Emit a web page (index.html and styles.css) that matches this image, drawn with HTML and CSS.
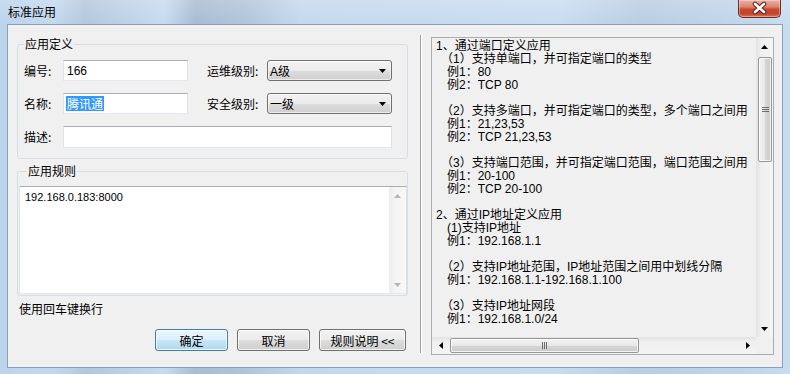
FILE: index.html
```html
<html>
<head>
<link rel="stylesheet" href="styles.css">
</head>
<body>
<div class="window">
    <div class="titlebar">
        <span class="title">标准应用</span>
        <div class="close">
            <svg width="41" height="17" viewBox="0 0 41 17">
                <path d="M16 4 L25 12 M25 4 L16 12" stroke="#5a1e16" stroke-width="4.6" stroke-linecap="round"/>
                <path d="M16 4 L25 12 M25 4 L16 12" stroke="#fff" stroke-width="2.6" stroke-linecap="round"/>
            </svg>
        </div>
    </div>

    <div class="client">
        <div class="left">
            <fieldset class="group group-def">
                <legend>应用定义</legend>
                <div class="form">
                    <span class="lbl">编号:</span>
                    <div class="edit">166</div>
                    <span class="lbl col4">运维级别:</span>
                    <div class="combo"><span>A级</span><svg width="7" height="4" viewBox="0 0 7 4"><path d="M0 0 H7 L3.5 4 Z" fill="#000"/></svg></div>

                    <span class="lbl">名称:</span>
                    <div class="edit"><span class="sel">腾讯通</span></div>
                    <span class="lbl col4">安全级别:</span>
                    <div class="combo"><span>一级</span><svg width="7" height="4" viewBox="0 0 7 4"><path d="M0 0 H7 L3.5 4 Z" fill="#000"/></svg></div>

                    <span class="lbl">描述:</span>
                    <div class="edit wide"></div>
                </div>
            </fieldset>

            <fieldset class="group group-rules">
                <legend>应用规则</legend>
                <div class="memo">
                    <div class="memo-text">192.168.0.183:8000</div>
                    <div class="vbar vbar-off">
                        <div class="arrow"><svg width="7" height="4" viewBox="0 0 7 4"><path d="M0 4 H7 L3.5 0 Z" fill="#b4b4b4"/></svg></div>
                        <div class="fill"></div>
                        <div class="arrow"><svg width="7" height="4" viewBox="0 0 7 4"><path d="M0 0 H7 L3.5 4 Z" fill="#b4b4b4"/></svg></div>
                    </div>
                </div>
            </fieldset>

            <div class="hint">使用回车键换行</div>

            <div class="buttons">
                <div class="btn btn-default">确定</div>
                <div class="btn">取消</div>
                <div class="btn btn-wide">规则说明 &lt;&lt;</div>
            </div>
        </div>

        <div class="sep"></div>

        <div class="help">
            <div class="help-text">
                <div>1、通过端口定义应用</div>
                <div class="p">（1）支持单端口，并可指定端口的类型</div>
                <div class="e">例1：80</div>
                <div class="e">例2：TCP 80</div>
                <div class="gap"></div>
                <div class="p">（2）支持多端口，并可指定端口的类型，多个端口之间用</div>
                <div class="e">例1：21,23,53</div>
                <div class="e">例2：TCP 21,23,53</div>
                <div class="gap"></div>
                <div class="p">（3）支持端口范围，并可指定端口范围，端口范围之间用</div>
                <div class="e">例1：20-100</div>
                <div class="e">例2：TCP 20-100</div>
                <div class="gap"></div>
                <div>2、通过IP地址定义应用</div>
                <div class="e">(1)支持IP地址</div>
                <div class="e">例1：192.168.1.1</div>
                <div class="gap"></div>
                <div class="p">（2）支持IP地址范围，IP地址范围之间用中划线分隔</div>
                <div class="e">例1：192.168.1.1-192.168.1.100</div>
                <div class="gap"></div>
                <div class="p">（3）支持IP地址网段</div>
                <div class="e">例1：192.168.1.0/24</div>
            </div>

            <div class="vbar">
                <div class="arrow"><svg width="7" height="4" viewBox="0 0 7 4"><path d="M0 4 H7 L3.5 0 Z" fill="#000"/></svg></div>
                <div class="thumb thumb-v">
                    <svg width="7" height="5" viewBox="0 0 7 5"><path d="M0 0.5 H7 M0 2.5 H7 M0 4.5 H7" stroke="#6b6b6b" stroke-width="1"/></svg>
                </div>
                <div class="fill"></div>
                <div class="arrow"><svg width="7" height="4" viewBox="0 0 7 4"><path d="M0 0 H7 L3.5 4 Z" fill="#000"/></svg></div>
            </div>

            <div class="hbar">
                <div class="arrow"><svg width="4" height="7" viewBox="0 0 4 7"><path d="M4 0 V7 L0 3.5 Z" fill="#000"/></svg></div>
                <div class="thumb thumb-h">
                    <svg width="5" height="7" viewBox="0 0 5 7"><path d="M0.5 0 V7 M2.5 0 V7 M4.5 0 V7" stroke="#6b6b6b" stroke-width="1"/></svg>
                </div>
                <div class="fill"></div>
                <div class="arrow"><svg width="4" height="7" viewBox="0 0 4 7"><path d="M0 0 V7 L4 3.5 Z" fill="#000"/></svg></div>
            </div>

            <div class="corner"></div>
        </div>
    </div>
</div>
</body>
</html>
```

FILE: styles.css
```css
html, body {
    margin: 0;
    width: 790px;
    height: 374px;
    overflow: hidden;
}

body {
    font-family: "Liberation Sans", "Noto Sans CJK SC", sans-serif;
    font-size: 12px;
    color: #000;
}

.window {
    width: 790px;
    height: 374px;
    box-sizing: border-box;
    padding: 0 7px 6px 7px;
    display: flex;
    flex-direction: column;
    background:
        linear-gradient(180deg, rgba(255,255,255,.18) 0, rgba(255,255,255,0) 24px),
        linear-gradient(90deg, #bcd4ec 0, #c3d8ee 55px, #b3c7dc 85px, #bdd1e6 125px, #c6dbf0 165px, #a8bcd2 195px, #b0c4d9 245px, #c4d8ed 300px, #c8dcf0 560px, #b9cde2 640px, #c3d7ec 760px, #c9ddf1 790px);
}

.titlebar {
    height: 24px;
    display: flex;
    align-items: flex-start;
    margin: 0 -7px;
    padding: 0 9px 0 8px;
}

.title {
    line-height: 24px;
    font-family: "Noto Sans CJK SC", sans-serif;
    font-size: 12px;
}

.close {
    margin-left: auto;
    width: 41px;
    height: 17px;
    border: 1px solid #6d2b22;
    border-top: none;
    border-radius: 0 0 5px 5px;
    background: linear-gradient(180deg, #eab1a5 0, #dc8573 40%, #c8482e 55%, #c0452c 80%, #d7735a 100%);
    box-shadow: inset 0 0 0 1px rgba(255,255,255,.35);
}

.close svg {
    display: block;
}

.client {
    flex: 1;
    display: flex;
    align-items: flex-start;
    background: #f0f0f0;
    border: 1px solid #8aa0b8;
    padding: 0 8px 0 9px;
}

/* left side */
.left {
    width: 391px;
    display: flex;
    flex-direction: column;
}

.group {
    margin: 0;
    border: 1px solid #d5dfe5;
    border-radius: 3px;
    min-width: 0;
}

.group legend {
    padding: 0 1px;
    line-height: 14px;
    font-family: "Noto Sans CJK SC", sans-serif;
}

.group-def {
    margin-top: 12px;
    padding: 9px 15px 10px 6px;
}

.group-rules {
    margin-top: 5px;
    padding: 8px 0 1px 1px;
}

.group-rules legend {
    margin-left: 8px;
}

.form {
    display: grid;
    grid-template-columns: 39px 125px 79px 125px;
    row-gap: 12px;
    align-items: center;
}

.lbl {
    font-family: "Noto Sans CJK SC", sans-serif;
    line-height: 16px;
}

.col4 {
    grid-column: 3;
    margin-left: 19px;
    white-space: nowrap;
}

.form .combo {
    grid-column: 4;
}

.edit {
    height: 21px;
    box-sizing: border-box;
    border: 1px solid;
    border-color: #abadb3 #dbdfe6 #e3e9ef #e2e3ea;
    background: #fff;
    padding-left: 3px;
    display: flex;
    align-items: center;
    font-size: 12px;
}

.edit.wide {
    grid-column: 2 / 5;
    height: 22px;
}

.sel {
    background: #3399ff;
    color: #fff;
    line-height: 15px;
    padding: 0 1px;
    margin-left: -1px;
    font-family: "Noto Sans CJK SC", sans-serif;
}

.combo {
    height: 21px;
    box-sizing: border-box;
    border: 1px solid #707070;
    border-radius: 3px;
    background: linear-gradient(180deg, #f2f2f2 0, #ebebeb 50%, #dddddd 51%, #cfcfcf 100%);
    box-shadow: inset 0 0 0 1px rgba(255,255,255,.6);
    padding: 0 5px 0 2px;
    display: flex;
    align-items: center;
    justify-content: space-between;
}

.combo svg {
    display: block;
}

.memo {
    height: 108px;
    box-sizing: border-box;
    border: 1px solid;
    border-color: #abadb3 #dbdfe6 #e3e9ef #e2e3ea;
    background: #fff;
    display: flex;
}

.memo-text {
    flex: 1;
    padding: 2px 5px;
    line-height: 16px;
    font-size: 11px;
}

.hint {
    margin-top: 5px;
    line-height: 16px;
    padding-left: 2px;
    font-family: "Noto Sans CJK SC", sans-serif;
}

.buttons {
    margin-top: 12px;
    display: flex;
    justify-content: flex-end;
    gap: 9px;
    padding-right: 2px;
}

.btn {
    width: 73px;
    height: 22px;
    box-sizing: border-box;
    border: 1px solid #707070;
    border-radius: 3px;
    background: linear-gradient(180deg, #f2f2f2 0, #ebebeb 50%, #dddddd 51%, #cfcfcf 100%);
    box-shadow: inset 0 0 0 1px rgba(255,255,255,.7);
    display: flex;
    align-items: center;
    justify-content: center;
    font-family: "Noto Sans CJK SC", sans-serif;
}

.btn-default {
    border-color: #3c7fb1;
    background: linear-gradient(180deg, #eaf6fd 0, #d9f0fc 50%, #c6e6f8 51%, #b2d8ee 100%);
    box-shadow: inset 0 0 0 1px rgba(255,255,255,.8);
}

.btn-wide {
    width: 87px;
}

/* divider */
.sep {
    width: 1px;
    height: 318px;
    margin: 10px 0 0 12px;
    border-left: 1px solid #a0a0a0;
    background: #fff;
}

/* help panel */
.help {
    width: 343px;
    height: 318px;
    box-sizing: border-box;
    margin: 12px 0 0 9px;
    border: 1px solid #abadb3;
    background: #f0f0f0;
    display: grid;
    grid-template-columns: 1fr 17px;
    grid-template-rows: 1fr 17px;
}

.help-text {
    overflow: hidden;
    white-space: nowrap;
    padding: 2px 0 0 4px;
    line-height: 13px;
    font-size: 12px;
}

.help-text .p {
    padding-left: 5px;
}

.help-text .e {
    padding-left: 11px;
}

.help-text .gap {
    height: 13px;
}

/* scrollbars */
.vbar {
    width: 17px;
    display: flex;
    flex-direction: column;
    background: linear-gradient(90deg, #e3e3e3 0, #efefef 30%, #f4f4f4 100%);
}

.vbar-off {
    background: linear-gradient(90deg, #ececec 0, #f4f4f4 40%, #f7f7f7 100%);
}

.hbar {
    display: flex;
    background: linear-gradient(180deg, #e3e3e3 0, #efefef 30%, #f4f4f4 100%);
}

.arrow {
    width: 17px;
    height: 17px;
    flex: none;
    display: flex;
    align-items: center;
    justify-content: center;
}

.arrow svg,
.thumb svg {
    display: block;
}

.fill {
    flex: 1;
}

.thumb {
    box-sizing: border-box;
    border: 1px solid #979797;
    border-radius: 2px;
    display: flex;
    align-items: center;
    justify-content: center;
    box-shadow: inset 0 0 0 1px rgba(255,255,255,.75);
}

.thumb-v {
    height: 105px;
    margin: 2px 1px 0 2px;
    background: linear-gradient(90deg, #f3f3f3 0, #e8e8e8 50%, #d6d6d6 51%, #cbcbcb 100%);
}

.thumb-h {
    width: 189px;
    margin: 1px 0 1px 1px;
    background: linear-gradient(180deg, #f3f3f3 0, #e8e8e8 50%, #d6d6d6 51%, #cbcbcb 100%);
}

.corner {
    background: #f0f0f0;
}
```
